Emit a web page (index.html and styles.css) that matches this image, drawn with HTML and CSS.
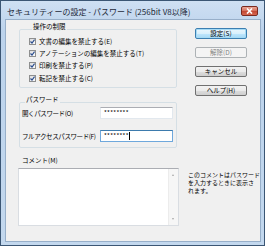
FILE: index.html
```html
<!DOCTYPE html>
<html lang="ja">
<head>
  <meta charset="UTF-8" />
  <title>セキュリティーの設定 - パスワード</title>
  <link rel="stylesheet" href="styles.css">
</head>
<body>

<div class="window">
  <div class="titlebar">
    <span class="title">セキュリティーの設定 - パスワード (256bit V8以降)</span>
    <span class="close">
      <svg width="7" height="6" viewBox="0 0 7 6"><path d="M1 0.5L6 5.5M6 0.5L1 5.5" stroke="#fff" stroke-width="1.6"/></svg>
    </span>
  </div>

  <div class="client">
    <div class="top">
      <div class="groups">
        <fieldset class="group restrict">
          <legend>操作の制限</legend>
          <label class="check"><span class="box"><svg width="5" height="5" viewBox="0 0 5 5"><path d="M0.5 2.5L2 4L4.6 0.6" fill="none" stroke="#2a4c8e" stroke-width="1.2"/></svg></span>文書の編集を禁止する(E)</label>
          <label class="check"><span class="box"><svg width="5" height="5" viewBox="0 0 5 5"><path d="M0.5 2.5L2 4L4.6 0.6" fill="none" stroke="#2a4c8e" stroke-width="1.2"/></svg></span>アノテーションの編集を禁止する(T)</label>
          <label class="check"><span class="box"><svg width="5" height="5" viewBox="0 0 5 5"><path d="M0.5 2.5L2 4L4.6 0.6" fill="none" stroke="#2a4c8e" stroke-width="1.2"/></svg></span>印刷を禁止する(P)</label>
          <label class="check last"><span class="box"><svg width="5" height="5" viewBox="0 0 5 5"><path d="M0.5 2.5L2 4L4.6 0.6" fill="none" stroke="#2a4c8e" stroke-width="1.2"/></svg></span>転記を禁止する(C)</label>
        </fieldset>

        <fieldset class="group password">
          <legend>パスワード</legend>
          <div class="field first">
            <span class="field-label">開くパスワード(O)</span>
            <span class="input">********</span>
          </div>
          <div class="field">
            <span class="field-label">フルアクセスパスワード(F)</span>
            <span class="input focused">********<i class="caret"></i></span>
          </div>
        </fieldset>
      </div>

      <div class="buttons">
        <button class="btn default">設定(S)</button>
        <button class="btn" disabled>解除(D)</button>
        <button class="btn">キャンセル</button>
        <button class="btn">ヘルプ(H)</button>
      </div>
    </div>

    <div class="comment">
      <div class="comment-label">コメント(M)</div>
      <div class="comment-row">
        <div class="textarea">
          <div class="scrollbar">
            <span class="arrow up"></span>
            <span class="arrow down"></span>
          </div>
        </div>
        <p class="note">このコメントはパスワード<br>を入力するときに表示さ<br>れます。</p>
      </div>
    </div>
  </div>
</div>

</body>
</html>
```

FILE: styles.css
```css
* {
  box-sizing: border-box;
}
body {
  margin: 0;
  font-family: "Noto Sans CJK JP", "Liberation Sans", sans-serif;
  font-size: 6.5px;
  color: #000;
  background: #fff;
}
.window {
  width: 265px;
  height: 246px;
  border: 1px solid #3b5674;
  padding: 0 3px 3px 4px;
  background: linear-gradient(#cfe0f3, #bcd3ec 30px, #c3d8ee);
  display: flex;
  flex-direction: column;
}
.titlebar {
  height: 18px;
  flex: none;
  display: flex;
  align-items: flex-start;
  padding: 5px 3px 0 2px;
}
.title {
  flex: 1;
  font-size: 8px;
  line-height: 12px;
  color: #1e2a3a;
  white-space: nowrap;
}
.close {
  width: 17px;
  height: 10px;
  border: 1px solid #7a2a20;
  border-radius: 2px;
  background: linear-gradient(#e8a899, #d36b58 50%, #c24632 51%, #d5664f);
  display: flex;
  align-items: center;
  justify-content: center;
}
.close svg {
  display: block;
}
.client {
  flex: 1;
  border: 1px solid #97afc9;
  background: #f0f0f0;
  padding: 2px 0 0 0;
}
.top {
  display: flex;
  align-items: flex-start;
}
.groups {
  margin-left: 13px;
  width: 158px;
}
.group {
  margin: 0;
  padding: 0;
  border: 1px solid #d5dfe5;
  border-radius: 2px;
  min-width: 0;
}
.group legend {
  margin-left: 3px;
  padding: 0 1px 7px 1px;
  line-height: 8px;
}
.restrict {
  padding: 0 0 4px 9px;
}
.check {
  display: flex;
  align-items: center;
  height: 9px;
  line-height: 9px;
  margin-bottom: 3px;
  white-space: nowrap;
}
.check.last {
  margin-top: 4px;
  margin-bottom: 0;
}
.box {
  width: 7px;
  height: 7px;
  border: 1px solid #8e8f8f;
  background: linear-gradient(135deg, #dcdcdc, #fdfdfd);
  margin-right: 3px;
  display: flex;
  align-items: center;
  justify-content: center;
}
.box svg {
  display: block;
}
.password {
  margin-top: 7px;
  padding: 0 2px 5px 2px;
}
.field {
  display: flex;
  align-items: center;
  height: 12px;
}
.field.first {
  margin-top: -3px;
  margin-bottom: 11px;
}
.field-label {
  width: 78px;
  white-space: nowrap;
  letter-spacing: -0.4px;
}
.input {
  width: 73px;
  height: 12px;
  background: #fff;
  border: 1px solid #e2e8ee;
  border-top-color: #abadb3;
  padding-left: 3px;
  font-size: 6px;
  line-height: 10px;
  letter-spacing: 0.3px;
  display: flex;
  align-items: center;
}
.input.focused {
  border-color: #6fa8dc;
  border-top-color: #3d7bad;
}
.caret {
  width: 1px;
  height: 8px;
  background: #000;
}
.buttons {
  margin-left: 18px;
  margin-top: 6px;
  display: flex;
  flex-direction: column;
  gap: 8px;
}
.btn {
  width: 52px;
  height: 11px;
  padding: 0;
  font: inherit;
  line-height: 9px;
  color: #000;
  border: 1px solid #707070;
  border-radius: 2px;
  background: linear-gradient(#f2f2f2, #ebebeb 50%, #dddddd 51%, #cfcfcf);
}
.btn.default {
  border-color: #3c7fb1;
  box-shadow: inset 0 0 0 1px #a6dbf5;
  background: linear-gradient(#eaf6fd, #d9f0fc 50%, #bee6fd 51%, #a7d9f5);
}
.btn:disabled {
  color: #838383;
  border-color: #adb2b5;
  background: #f4f4f4;
}
.comment {
  margin-top: 8px;
}
.comment-label {
  margin-left: 16px;
  line-height: 9px;
}
.comment-row {
  display: flex;
  align-items: flex-start;
  margin-top: 3px;
}
.textarea {
  margin-left: 12px;
  width: 161px;
  height: 58px;
  background: #fff;
  border: 1px solid #d9dde2;
  border-top-color: #abadb3;
  display: flex;
  justify-content: flex-end;
}
.scrollbar {
  width: 10px;
  background: #f6f6f6;
  border-left: 1px solid #ececec;
  display: flex;
  flex-direction: column;
  justify-content: space-between;
  align-items: center;
  padding: 5px 0 5px;
}
.arrow {
  width: 0;
  height: 0;
  border-left: 1.5px solid transparent;
  border-right: 1.5px solid transparent;
}
.arrow.up {
  border-bottom: 2px solid #a8a8a8;
}
.arrow.down {
  border-top: 2px solid #a8a8a8;
}
.note {
  margin: 3px 0 0 9px;
  font-size: 6px;
  line-height: 8px;
  white-space: nowrap;
}
```
